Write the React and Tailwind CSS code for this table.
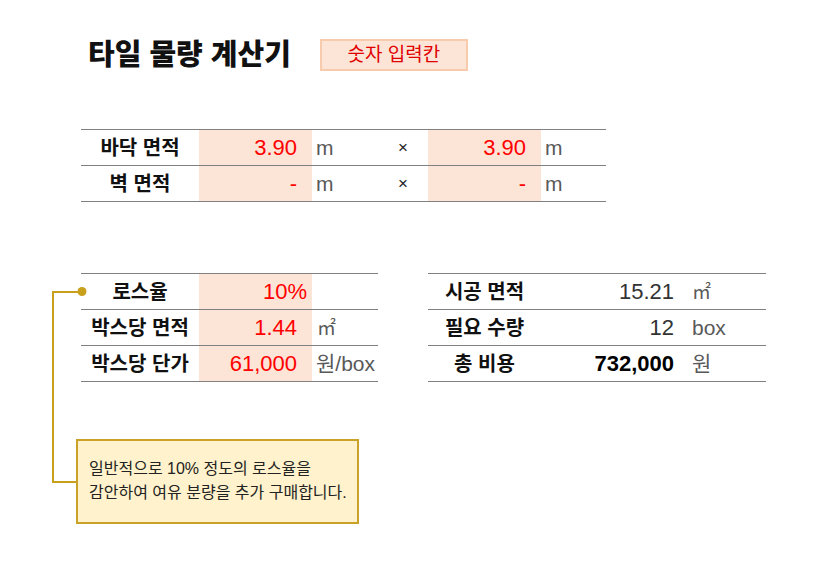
const FONT = "font-['Liberation_Sans','Noto_Sans_CJK_KR',sans-serif]";

function Label({ children }) {
  return (
    <div className="flex items-center justify-center text-[20px] font-bold text-[#111]">{children}</div>
  );
}

function Input({ children, pr = 'pr-[15px]' }) {
  return (
    <div className={`flex items-center justify-end bg-[#fce4d6] text-[22px] text-[#ff0000] ${pr}`}>{children}</div>
  );
}

function Unit({ children, pl = 'pl-[4px]' }) {
  return <div className={`flex items-center text-[21px] text-[#595959] ${pl}`}>{children}</div>;
}

const sqm = <span className="font-['Noto_Sans_CJK_KR',sans-serif] text-[19px]">㎡</span>;

export default function App() {
  return (
    <div className={`relative w-[816px] h-[575px] bg-white ${FONT}`}>
      {/* connector line for the note */}
      <svg className="absolute left-0 top-0 pointer-events-none" width="816" height="575">
        <path d="M82 292 H53 V482 H76" fill="none" stroke="#c9a01c" strokeWidth="2" />
        <circle cx="82" cy="291.5" r="4.5" fill="#c9a01c" />
      </svg>

      <div className="flex items-center gap-[29px] pt-[39px] pl-[88px]">
        <h1 className="text-[29px] font-black leading-[32px] text-[#111]">타일 물량 계산기</h1>
        <div className="flex h-[32px] w-[148px] items-center justify-center border-2 border-[#f8cbad] bg-[#fce4d6] text-[19px] text-[#e00000]">
          숫자 입력칸
        </div>
      </div>

      {/* dimensions */}
      <div className="ml-[81px] mt-[58px] w-[525px] border-t border-[#808080]">
        {[
          ['바닥 면적', '3.90', '3.90'],
          ['벽 면적', '-', '-'],
        ].map(([label, a, b]) => (
          <div key={label} className="grid h-[36px] grid-cols-[118px_113px_66px_50px_113px_65px] border-b border-[#808080]">
            <Label>{label}</Label>
            <Input>{a}</Input>
            <Unit>m</Unit>
            <div className="flex items-center justify-start pl-[20px] text-[17px] text-[#222]">×</div>
            <Input>{b}</Input>
            <Unit>m</Unit>
          </div>
        ))}
      </div>

      <div className="ml-[81px] mt-[71px] flex gap-[50px]">
        {/* inputs */}
        <div className="w-[297px] border-t border-[#808080]">
          <div className="grid h-[36px] grid-cols-[118px_113px_66px] border-b border-[#808080]">
            <Label>로스율</Label>
            <Input pr="pr-[5px]">10%</Input>
            <Unit> </Unit>
          </div>
          <div className="grid h-[36px] grid-cols-[118px_113px_66px] border-b border-[#808080]">
            <Label>박스당 면적</Label>
            <Input>1.44</Input>
            <Unit pl="pl-[5px]">{sqm}</Unit>
          </div>
          <div className="grid h-[36px] grid-cols-[118px_113px_66px] border-b border-[#808080]">
            <Label>박스당 단가</Label>
            <Input>61,000</Input>
            <Unit>원/box</Unit>
          </div>
        </div>

        {/* results */}
        <div className="w-[338px] border-t border-[#808080]">
          {[
            ['시공 면적', '15.21', sqm, false],
            ['필요 수량', '12', 'box', false],
            ['총 비용', '732,000', '원', true],
          ].map(([label, value, unit, strong]) => (
            <div key={label} className="grid h-[36px] grid-cols-[113px_143px_82px] border-b border-[#808080]">
              <Label>{label}</Label>
              <div
                className={`flex items-center justify-end pr-[10px] text-[22px] ${
                  strong ? 'font-bold text-[#000]' : 'text-[#333]'
                }`}
              >
                {value}
              </div>
              <Unit pl="pl-[8px]">{unit}</Unit>
            </div>
          ))}
        </div>
      </div>

      {/* note */}
      <div className="ml-[76px] mt-[57px] w-[283px] border-2 border-[#c9a227] bg-[#fff2cc] pl-[11px] pt-[16px] pb-[17px] text-[16px] leading-[24px] text-[#222]">
        <p>일반적으로 10% 정도의 로스율을</p>
        <p>감안하여 여유 분량을 추가 구매합니다.</p>
      </div>
    </div>
  );
}
